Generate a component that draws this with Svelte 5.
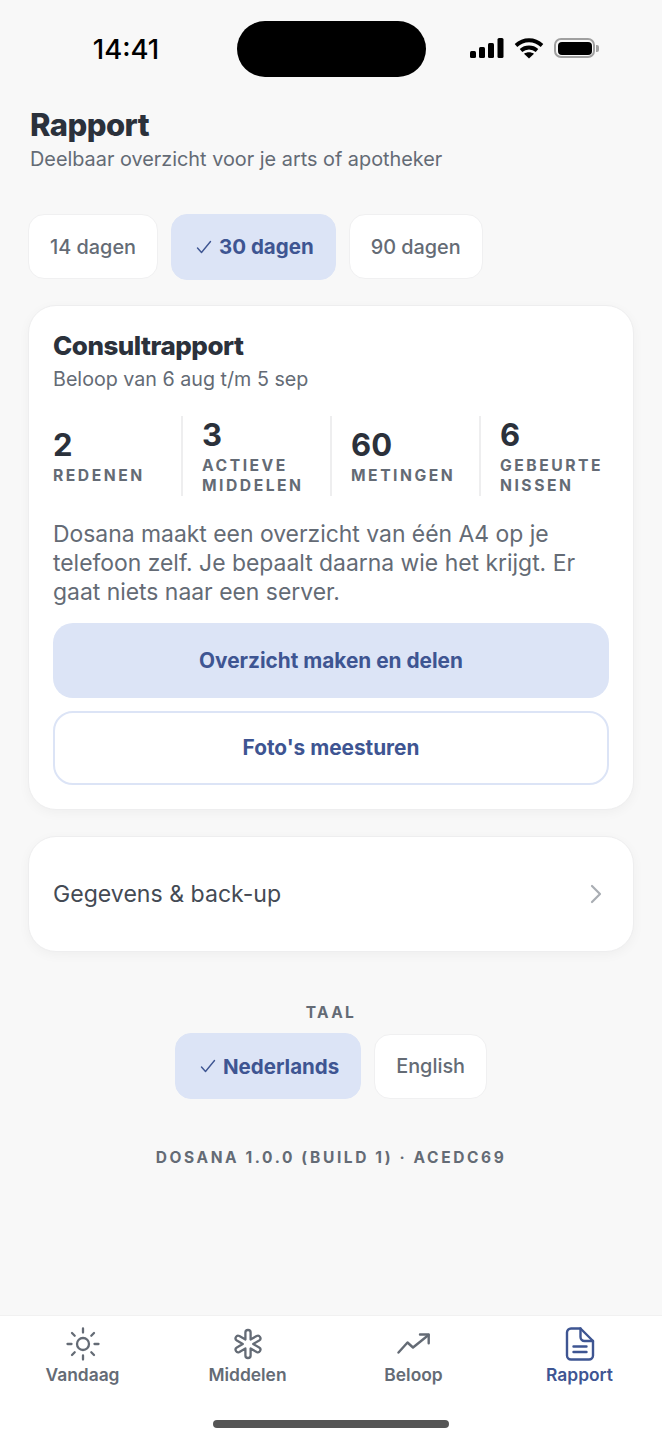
<script>
  const stats = [
    { n: '2', l: ['REDENEN'] },
    { n: '3', l: ['ACTIEVE', 'MIDDELEN'] },
    { n: '60', l: ['METINGEN'] },
    { n: '6', l: ['GEBEURTE', 'NISSEN'] }
  ];
</script>

<div class="phone">
  <header class="status">
    <span class="time">14:41</span>
    <div class="island"></div>
    <div class="sys">
      <svg width="34" height="20" viewBox="0 0 34 20" fill="#000"><rect x="0" y="13" width="6" height="7" rx="1.5"/><rect x="9" y="9" width="6" height="11" rx="1.5"/><rect x="18" y="5" width="6" height="15" rx="1.5"/><rect x="27.500" y="0" width="6" height="20" rx="1.5"/></svg>
      <svg width="30" height="22" viewBox="0 0 30 22" fill="none" stroke="#000" stroke-width="3.800"><path d="M2 8.500C9.500 1.500 20.500 1.500 28 8.500"/><path d="M7 13.500C11.500 9.500 18.500 9.500 23 13.500"/><path d="M15 21.500L10 16.800C13 14.800 17 14.800 20 16.800Z" fill="#000" stroke="none"/></svg>
      <div class="battery"><div class="cell"><div class="fill"></div></div><div class="cap"></div></div>
    </div>
  </header>

  <main>
    <h1>Rapport</h1>
    <p class="sub">Deelbaar overzicht voor je arts of apotheker</p>

    <div class="chips periods">
      <button class="chip">14 dagen</button>
      <button class="chip on"><svg class="tick" width="16" height="14" viewBox="0 0 16 14" fill="none" stroke="currentColor" stroke-width="1.400" stroke-linecap="round" stroke-linejoin="round"><path d="M1.500 8l4 4.500L14.500 1.500"/></svg>30 dagen</button>
      <button class="chip">90 dagen</button>
    </div>

    <section class="card report">
      <h2>Consultrapport</h2>
      <p class="range">Beloop van 6 aug t/m 5 sep</p>
      <div class="stats">
        {#each stats as s}
          <div class="stat">
            <div class="num">{s.n}</div>
            {#each s.l as line}<div class="lab">{line}</div>{/each}
          </div>
        {/each}
      </div>
      <p class="body">Dosana maakt een overzicht van één A4 op je telefoon zelf. Je bepaalt daarna wie het krijgt. Er gaat niets naar een server.</p>
      <button class="btn primary">Overzicht maken en delen</button>
      <button class="btn outline">Foto's meesturen</button>
    </section>

    <section class="card row">
      <span>Gegevens &amp; back-up</span>
      <svg width="14" height="22" viewBox="0 0 14 22" fill="none" stroke="#a9adb3" stroke-width="2.200" stroke-linecap="round" stroke-linejoin="round"><path d="M3 3l8 8-8 8"/></svg>
    </section>

    <div class="taal">TAAL</div>
    <div class="chips lang">
      <button class="chip on"><svg class="tick" width="16" height="14" viewBox="0 0 16 14" fill="none" stroke="currentColor" stroke-width="1.400" stroke-linecap="round" stroke-linejoin="round"><path d="M1.500 8l4 4.500L14.500 1.500"/></svg>Nederlands</button>
      <button class="chip">English</button>
    </div>
    <div class="version">DOSANA 1.0.0 (BUILD 1) · ACEDC69</div>
  </main>

  <nav>
    <div class="tab">
      <svg width="34" height="34" viewBox="0 0 34 34" fill="none" stroke="currentColor" stroke-width="2.300" stroke-linecap="round"><circle cx="17" cy="17" r="6"/><path d="M17 1.500v4M17 28.500v4M1.500 17h4M28.500 17h4M6 6l2.700 2.700M25.300 25.300L28 28M6 28l2.700-2.700M25.300 8.700L28 6"/></svg>
      <span>Vandaag</span>
    </div>
    <div class="tab">
      <svg width="34" height="34" viewBox="0 0 34 34" fill="none" stroke="currentColor" stroke-width="2.300" stroke-linecap="round" stroke-linejoin="round"><path d="M14.400 5.600A2.600 2.600 0 0 1 19.600 5.600V12.500L25.570 9.050A2.600 2.600 0 0 1 28.170 13.550L22.200 17L28.170 20.450A2.600 2.600 0 0 1 25.570 24.950L19.600 21.500V28.400A2.600 2.600 0 0 1 14.400 28.400V21.500L8.430 24.950A2.600 2.600 0 0 1 5.830 20.450L11.800 17L5.830 13.550A2.600 2.600 0 0 1 8.430 9.050L14.400 12.500Z"/></svg>
      <span>Middelen</span>
    </div>
    <div class="tab">
      <svg width="34" height="34" viewBox="0 0 34 34" fill="none" stroke="currentColor" stroke-width="2.400" stroke-linecap="round" stroke-linejoin="round"><path d="M1.500 25.500L10.500 15.500L16 20.500L31.500 8"/><path d="M23 7.500h8.700v8.700"/></svg>
      <span>Beloop</span>
    </div>
    <div class="tab active">
      <svg width="34" height="34" viewBox="0 0 34 34" fill="none" stroke="currentColor" stroke-width="2.400" stroke-linecap="round" stroke-linejoin="round"><path d="M8 1.500h9.500L30 14v14.500a4 4 0 0 1-4 4H8a4 4 0 0 1-4-4v-23a4 4 0 0 1 4-4z"/><path d="M17.500 1.500V10a4 4 0 0 0 4 4H30"/><path d="M10.500 19.500h13M10.500 25h13"/></svg>
      <span>Rapport</span>
    </div>
  </nav>
  <div class="home-wrap"><div class="home"></div></div>
</div>

<style>
  :global(body) { margin: 0; background: #f8f8f8; }
  .phone {
    width: 662px; height: 1440px; display: flex; flex-direction: column;
    background: #f8f8f8; font-family: Inter, "Noto Sans", sans-serif; overflow: hidden; color: #2b313b;
  }
  .status {
    height: 100px; flex: none; display: grid; grid-template-columns: 237px 189px 1fr; align-items: start;
    padding-top: 21px; box-sizing: border-box;
  }
  .time { font-size: 27.500px; font-weight: 500; color: #000; justify-self: center; padding: 11px 0 0 15px; line-height: 34px; }
  .island { width: 189px; height: 56px; border-radius: 28px; background: #000; }
  .sys { display: flex; align-items: center; gap: 10px; padding: 16px 0 0 44px; }
  .battery { display: flex; align-items: center; }
  .cell { box-sizing: border-box; width: 41px; height: 20px; padding: 1.500px; border: 2px solid #a0a0a0; border-radius: 7px; }
  .fill { width: 100%; height: 100%; background: #000; border-radius: 4px; }
  .cap { width: 3px; height: 7px; margin-left: 1px; background: #a2a2a2; border-radius: 0 2px 2px 0; }

  main { flex: 1; display: flex; flex-direction: column; align-items: stretch; padding: 0 28px; min-height: 0; }
  h1 { margin: 4px 0 0 2px; font-size: 31px; line-height: 42px; font-weight: 800; letter-spacing: -0.55px; color: #2b313b; }
  .sub { margin: -1px 0 1px 2px; font-size: 19.850px; line-height: 28px; color: #646b75; }

  .chips { display: flex; gap: 13px; align-items: center; }
  .periods { margin-top: 39.500px; }
  .chip {
    box-sizing: border-box; height: 65px; padding: 0 21px; font: 500 19.850px Inter, sans-serif; color: #646b75;
    background: #fff; border: 1.500px solid #f0f0f1; border-radius: 16px; white-space: nowrap;
  }
  .chip.on { display: flex; align-items: center; height: 66px; background: #dce4f6; border-color: #dce4f6; color: #3e5592; font-weight: 700; font-size: 20.500px; padding: 0 21px 0 24px; }
  .tick { margin-right: 7px; }

  .card { box-sizing: border-box; background: #fff; border: 1.500px solid #eeeeef; border-radius: 28px; box-shadow: 0 3px 12px rgba(0,0,0,.04); }
  .report { margin-top: 25.500px; height: 505px; padding: 22px 24px 0; display: flex; flex-direction: column; }
  h2 { margin: 0; font-size: 26px; line-height: 36px; font-weight: 800; letter-spacing: -0.5px; color: #2b313b; }
  .range { margin: 1px 0 0; font-size: 19.700px; line-height: 28px; color: #646b75; }
  .stats { display: grid; grid-template-columns: 128px 149px 149px 130px; height: 79px; margin-top: 23px; }
  .stat { display: flex; flex-direction: column; justify-content: center; padding: 0 0 0 19px; border-left: 2px solid #eeeeef; box-sizing: border-box; }
  .stat:first-child { padding-left: 0; border-left: 0; }
  .num { font-size: 31px; line-height: 38px; margin-bottom: 2px; font-weight: 700; color: #2b313b; }
  .lab { font-size: 15.700px; line-height: 20px; font-weight: 700; letter-spacing: 2.500px; color: #646b75; white-space: nowrap; }
  .body { margin: 25px 0 0; font-size: 22.900px; line-height: 29px; color: #646b75; }
  .btn { display: block; width: 100%; box-sizing: border-box; height: 74.500px; border-radius: 20px; font: 700 20.800px Inter, sans-serif; color: #3e5592; }
  .primary { margin-top: 16px; background: #dce4f6; border: 0; }
  .outline { margin-top: 13px; background: #fff; border: 2.500px solid #dce4f6; }

  .row { margin-top: 26px; height: 116px; padding: 0 30px 0 24px; display: flex; align-items: center; justify-content: space-between; font-size: 23.100px; color: #444a54; }

  .taal { margin-top: 50.500px; text-align: center; font-size: 15.500px; line-height: 20px; font-weight: 700; letter-spacing: 2.300px; color: #646b75; }
  .lang { margin-top: 10.500px; justify-content: center; }
  .version { margin-top: 48.500px; text-align: center; font-size: 15.500px; line-height: 20px; font-weight: 700; letter-spacing: 2.600px; color: #646b75; }

  nav { flex: none; height: 78px; background: #fff; border-top: 1.500px solid #f1f1f1; display: grid; grid-template-columns: 165px 165px 167px 165px; box-sizing: border-box; }
  .tab { display: flex; flex-direction: column; align-items: center; padding-top: 11px; font-size: 17.400px; line-height: 24px; font-weight: 600; color: #646b75; }
  .tab svg { display: block; margin-bottom: 2px; }
  .tab.active { color: #3e5592; }
  .home-wrap { flex: none; height: 47px; background: #fff; display: flex; justify-content: center; padding-top: 27px; box-sizing: border-box; }
  .home { width: 236px; height: 8px; border-radius: 4px; background: #555; }
</style>
